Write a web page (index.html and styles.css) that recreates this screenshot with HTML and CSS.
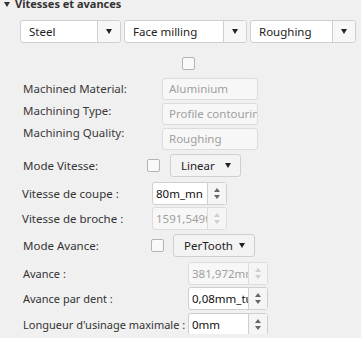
FILE: index.html
```html
<!DOCTYPE html>
<html>
<head>
<meta name="viewport" content="width=device-width, initial-scale=1.0">
<link rel="stylesheet" href="styles.css">
</head>
<body>

<div class="panel">
  <div class="section-title">
    <span class="caret"></span>
    <span>Vitesses et avances</span>
  </div>

  <div class="combo-row">
    <div class="combo steel"><span class="combo-text">Steel</span><span class="combo-btn"><span class="tri-down"></span></span></div>
    <div class="combo mill"><span class="combo-text">Face milling</span><span class="combo-btn"><span class="tri-down"></span></span></div>
    <div class="combo rough"><span class="combo-text">Roughing</span><span class="combo-btn"><span class="tri-down"></span></span></div>
  </div>

  <div class="check-row">
    <span class="checkbox"></span>
  </div>

  <div class="info-block">
    <div class="info-labels">
      <span>Machined Material:</span>
      <span>Machining Type:</span>
      <span>Machining Quality:</span>
    </div>
    <div class="info-fields">
      <div class="line-edit">Aluminium</div>
      <div class="line-edit">Profile contouring</div>
      <div class="line-edit">Roughing</div>
    </div>
  </div>

  <div class="field-row mode-vitesse">
    <span class="label">Mode Vitesse:</span>
    <span class="checkbox"></span>
    <div class="flat-combo linear"><span>Linear</span><span class="tri-down"></span></div>
  </div>

  <div class="field-row spin-a">
    <span class="label">Vitesse de coupe :</span>
    <div class="spin"><span class="spin-text">80m_mn</span><span class="spin-btns"><span class="tri-up"></span><span class="tri-dn"></span></span></div>
  </div>
  <div class="field-row spin-a">
    <span class="label">Vitesse de broche :</span>
    <div class="spin disabled"><span class="spin-text">1591,549tr_mn</span><span class="spin-btns"><span class="tri-up"></span><span class="tri-dn"></span></span></div>
  </div>

  <div class="field-row mode-avance">
    <span class="label">Mode Avance:</span>
    <span class="checkbox"></span>
    <div class="flat-combo pertooth"><span>PerTooth</span><span class="tri-down"></span></div>
  </div>

  <div class="field-row spin-b">
    <span class="label">Avance :</span>
    <div class="spin disabled"><span class="spin-text">381,972mm_mn</span><span class="spin-btns"><span class="tri-up"></span><span class="tri-dn"></span></span></div>
  </div>
  <div class="field-row spin-b">
    <span class="label">Avance par dent :</span>
    <div class="spin"><span class="spin-text">0,08mm_tu</span><span class="spin-btns"><span class="tri-up"></span><span class="tri-dn"></span></span></div>
  </div>
  <div class="field-row spin-b">
    <span class="label">Longueur d'usinage maximale :</span>
    <div class="spin"><span class="spin-text">0mm</span><span class="spin-btns"><span class="tri-up"></span><span class="tri-dn"></span></span></div>
  </div>
</div>

</body>
</html>
```

FILE: styles.css
```css
* {box-sizing: border-box;}
html, body {
  margin: 0;
  background: #f0f0f0;
  overflow: hidden;
}
body {
  font-family: "Noto Sans", "Open Sans", sans-serif;
  font-size: 11.5px;
  color: #333;
}
.panel {
  width: 361px;
  height: 338px;
}
.section-title {
  display: flex;
  align-items: center;
  height: 14px;
  margin-top: -4px;
  padding-left: 4px;
  font-size: 11px;
  font-weight: bold;
  color: #333;
}
.caret {
  width: 0;
  height: 0;
  border-left: 3.5px solid transparent;
  border-right: 3.5px solid transparent;
  border-top: 5px solid #333;
  margin-right: 5px;
  margin-top: 2px;
}

/* top combo boxes */
.combo-row {
  display: flex;
  gap: 3px;
  margin-top: 10px;
  padding-left: 20px;
}
.combo {
  display: flex;
  height: 23px;
  background: #fff;
  border: 1px solid #cfcfcf;
  border-radius: 3px;
  color: #222;
}
.combo.steel {width: 101px;}
.combo.mill {width: 123px;}
.combo.rough {width: 106px;}
.combo-text {
  flex: 1;
  padding-left: 8px;
  line-height: 21px;
  overflow: hidden;
  white-space: nowrap;
}
.combo-btn {
  width: 23px;
  display: flex;
  align-items: center;
  justify-content: center;
  border-left: 1px solid #cfcfcf;
  background: #f7f7f7;
  border-radius: 0 2px 2px 0;
}
.tri-down {
  width: 0;
  height: 0;
  border-left: 3.5px solid transparent;
  border-right: 3.5px solid transparent;
  border-top: 5px solid #222;
}

.checkbox {
  display: block;
  width: 13px;
  height: 13px;
  border: 1px solid #b4b4b4;
  border-radius: 2px;
  background: #f9f9f9;
}
.check-row {
  display: flex;
  padding-left: 182px;
  margin-top: 14px;
}

/* read-only material info */
.info-block {
  display: flex;
  margin-top: 8px;
}
.info-labels {
  width: 162px;
  padding-left: 23px;
  padding-top: 3px;
  display: flex;
  flex-direction: column;
  gap: 6px;
  color: #3a3a3a;
}
.info-labels span {
  line-height: 16px;
}
.info-fields {
  display: flex;
  flex-direction: column;
  gap: 3px;
}
.line-edit {
  width: 96px;
  height: 22px;
  line-height: 20px;
  padding-left: 6px;
  border: 1px solid #dcdcdc;
  border-radius: 3px;
  background: #f7f7f7;
  color: #a0a0a0;
  white-space: nowrap;
  overflow: hidden;
}

/* form rows */
.field-row {
  display: flex;
  align-items: center;
  padding-left: 23px;
}
.label {
  white-space: nowrap;
  color: #333;
}
.mode-vitesse {margin-top: 4px;}
.mode-vitesse .label {width: 124px;}
.mode-vitesse .checkbox {margin-right: 10px;}
.mode-avance {margin-top: 4px;}
.mode-avance .label {width: 128px;}
.mode-avance .checkbox {margin-right: 9px;}

.flat-combo {
  display: flex;
  align-items: center;
  justify-content: space-between;
  height: 23px;
  padding: 0 9px 0 10px;
  border: 1px solid #cfcfcf;
  border-radius: 3px;
  background: #f3f3f3;
  color: #222;
}
.flat-combo.linear {width: 71px;}
.flat-combo.pertooth {width: 82px;}

.spin-a {padding-left: 22px; margin-top: 5px;}
.spin-a + .spin-a {margin-top: 2px;}
.spin-a .label {width: 130px;}
.spin-b {margin-top: 5px;}
.spin-b + .spin-b {margin-top: 2px;}
.spin-b + .spin-b + .spin-b {margin-top: 3px;}
.spin-b .label {width: 165px; font-size: 11px;}

.spin {
  display: flex;
  height: 23px;
  width: 75px;
  border: 1px solid #cfcfcf;
  border-radius: 3px;
  background: #fff;
  color: #111;
}
.spin-b .spin {width: 80px;}
.spin-text {
  flex: 1;
  padding-left: 3px;
  line-height: 21px;
  overflow: hidden;
  white-space: nowrap;
}
.spin-btns {
  width: 19px;
  display: flex;
  flex-direction: column;
  align-items: center;
  justify-content: center;
  gap: 3px;
  border-left: 1px solid #cfcfcf;
  background: #f5f5f5;
}
.tri-up, .tri-dn {
  width: 0;
  height: 0;
  border-left: 3.5px solid transparent;
  border-right: 3.5px solid transparent;
}
.tri-up {border-bottom: 4px solid #666;}
.tri-dn {border-top: 4px solid #666;}
.spin.disabled {
  background: #f7f7f7;
  border-color: #dcdcdc;
  color: #a0a0a0;
}
.spin.disabled .spin-btns {border-left-color: #dcdcdc;}
.spin.disabled .tri-up {border-bottom-color: #cfcfcf;}
.spin.disabled .tri-dn {border-top-color: #cfcfcf;}
```
